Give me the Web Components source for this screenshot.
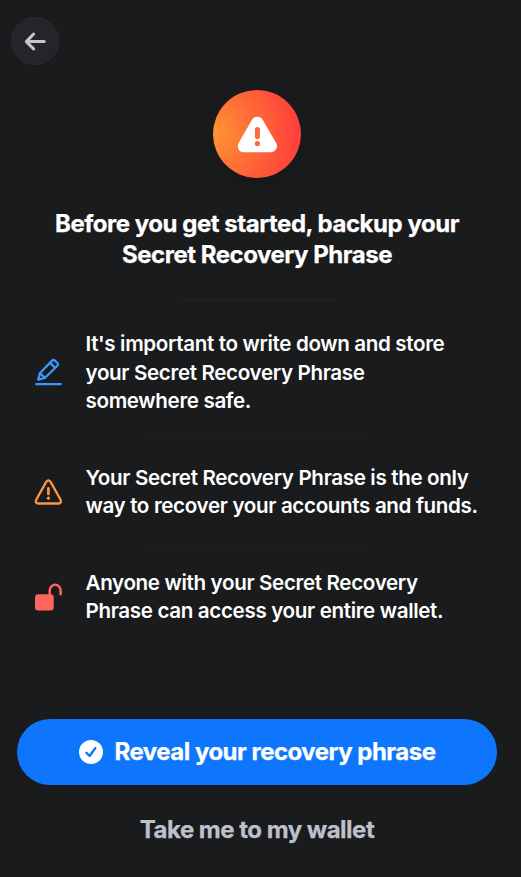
<!DOCTYPE html>
<html lang="en">
<head>
<meta charset="utf-8">
<title>Backup your wallet</title>
<style>
html, body { margin: 0; background: #1a1b1d; }
body { font-family: Inter, "Liberation Sans", sans-serif; color: #fff; }
svg { display: block; }
</style>
</head>
<body>
<backup-screen></backup-screen>
<script>
const define = (name, html) => {
  const template = document.createElement('template');
  template.innerHTML = html;
  customElements.define(name, class extends HTMLElement {
    constructor() {
      super();
      this.attachShadow({ mode: 'open' }).append(template.content.cloneNode(true));
    }
  });
};

define('back-button', `
<style>
:host { display: block; width: 48px; height: 48px; }
button { all: unset; box-sizing: border-box; width: 48px; height: 48px; border-radius: 50%; background: #242529; border: 1px solid #2b2c30; display: grid; place-items: center; }
</style>
<button aria-label="Back"><svg width="22" height="20" viewBox="0 0 22 20" fill="none" stroke="#c4c6cf" stroke-width="3" stroke-linecap="round" stroke-linejoin="round"><path d="M20.2 10.6H3M9.6 3L2.4 10.6L9.6 17.9"/></svg></button>`);

define('warning-badge', `
<style>
:host { display: grid; place-items: center; width: 88px; height: 88px; border-radius: 50%; background: radial-gradient(circle at 0 50%, #ff9533 0%, #ff3e3b 88px); box-shadow: 0 8px 20px rgba(0,0,0,.14); }
svg { display: block; }
</style>
<svg width="88" height="88" viewBox="0 0 88 88"><path fill="#fff" fill-rule="evenodd" d="M39.2 29.4C41.3 25.7 47.4 25.7 49.5 29.4L63.2 53.1C65.4 57.2 62.6 62.2 58.1 62.2H30.7C26.1 62.2 23.4 57.2 25.6 53.1ZM44.4 36.9A2.5 2.5 0 0 0 41.9 39.4V46.7A2.5 2.5 0 0 0 46.9 46.7V39.4A2.5 2.5 0 0 0 44.4 36.9ZM44.4 51A2.65 2.55 0 1 0 44.4 56.1A2.65 2.55 0 1 0 44.4 51Z"/></svg>`);

define('screen-title', `
<style>
:host { display: block; text-align: center; }
h1 { margin: 0; font-size: 24px; font-weight: 700; line-height: 31px; letter-spacing: -.47px; -webkit-text-stroke: .25px currentColor; }
</style>
<h1><slot></slot></h1>`);

define('soft-divider', `
<style>
:host { display: block; width: var(--length, 222px); height: var(--weight, 1px); background: #1f2022; }
</style>`);

define('info-row', `
<style>
:host { display: flex; align-items: center; gap: 22.5px; padding-left: 34px; }
p { margin: 0; font-size: 20.6px; font-weight: 600; line-height: 28.7px; letter-spacing: -.35px; white-space: nowrap; }
::slotted(svg) { display: block; flex: none; margin-bottom: var(--lift, 0px); }
</style>
<slot name="icon"></slot><p><slot></slot></p>`);

define('primary-button', `
<style>
:host { display: block; width: 480px; }
button { all: unset; box-sizing: border-box; display: flex; justify-content: center; align-items: center; gap: 12px; width: 100%; height: 66px; border-radius: 33px; background: #0e76fd; font-size: 24px; font-weight: 700; line-height: 30px; letter-spacing: -.51px; -webkit-text-stroke: .25px currentColor; }
</style>
<button><svg width="24" height="24" viewBox="0 0 24 24"><circle cx="12" cy="12" r="12" fill="#fff"/><path d="M7.5 12.8L10.6 16L16.3 8.1" fill="none" stroke="#0e76fd" stroke-width="2.4" stroke-linecap="round" stroke-linejoin="round"/></svg><span><slot></slot></span></button>`);

define('text-button', `
<style>
:host { display: block; }
button { all: unset; font-size: 24px; font-weight: 700; line-height: 30px; letter-spacing: -.5px; color: #bfc1ca; -webkit-text-stroke: .25px currentColor; }
</style>
<button><slot></slot></button>`);

define('backup-screen', `
<style>
:host { display: flex; flex-direction: column; align-items: center; box-sizing: border-box; width: 514px; height: 877px; padding-top: 17px; }
back-button { align-self: flex-start; margin-left: 11px; }
warning-badge { margin-top: 25px; }
screen-title { margin-top: 30px; }
.head { --length: 156px; --weight: 2px; margin-top: 29px; }
.list { display: flex; flex-direction: column; align-self: stretch; margin-top: 29px; }
.list soft-divider { align-self: center; margin: 23px 0 23.6px; }
.list soft-divider + info-row + soft-divider { margin-top: 23.4px; margin-bottom: 23px; }
.pencil { --lift: 3px; }
footer { display: flex; flex-direction: column; align-items: center; gap: 30px; margin-top: 93.1px; }
</style>
<back-button></back-button>
<warning-badge></warning-badge>
<screen-title>Before you get started, backup your<br>Secret Recovery Phrase</screen-title>
<soft-divider class="head"></soft-divider>
<div class="list">
  <info-row class="pencil">
    <svg slot="icon" width="29" height="29" viewBox="0 0 29 29" fill="none" stroke="#3898ff" stroke-width="2.3" stroke-linecap="round" stroke-linejoin="round"><path d="M2.2 27.2H26.8"/><path d="M4.2 22.6L5.9 16.3L18.1 3.6Q19.5 2.2 20.9 3.6L23.3 6Q24.7 7.4 23.3 8.8L10.8 21Z"/><path d="M16.1 5.9L21 10.8M6.2 16.4L10.6 20.8"/></svg>
    It's important to write down and store<br>your Secret Recovery Phrase<br>somewhere safe.
  </info-row>
  <soft-divider></soft-divider>
  <info-row>
    <svg slot="icon" width="29" height="29" viewBox="0 0 29 29" fill="none" stroke="#ff9640" stroke-width="2.3" stroke-linecap="round" stroke-linejoin="round"><path d="M12.2 3.9Q14.4 1 16.6 3.9L26.6 21.8Q27.9 25.3 24.5 25.5H4.3Q.9 25.3 2.2 21.8Z"/><path d="M14.4 10.4V15.9" stroke-width="2.7"/><circle cx="14.4" cy="20.2" r="1.6" fill="#ff9640" stroke="none"/></svg>
    Your Secret Recovery Phrase is the only<br>way to recover your accounts and funds.
  </info-row>
  <soft-divider></soft-divider>
  <info-row>
    <svg slot="icon" width="29" height="29" viewBox="0 0 29 29"><rect x="1" y="11.3" width="18.7" height="16.2" rx="3" fill="#ff645d"/><path d="M15.7 12.5V7.7A5.4 5.9 0 0 1 26.6 7.7V11.2" fill="none" stroke="#ff645d" stroke-width="2.5" stroke-linecap="round"/></svg>
    Anyone with your Secret Recovery<br>Phrase can access your entire wallet.
  </info-row>
</div>
<footer>
  <primary-button>Reveal your recovery phrase</primary-button>
  <text-button>Take me to my wallet</text-button>
</footer>`);
</script>
</body>
</html>
